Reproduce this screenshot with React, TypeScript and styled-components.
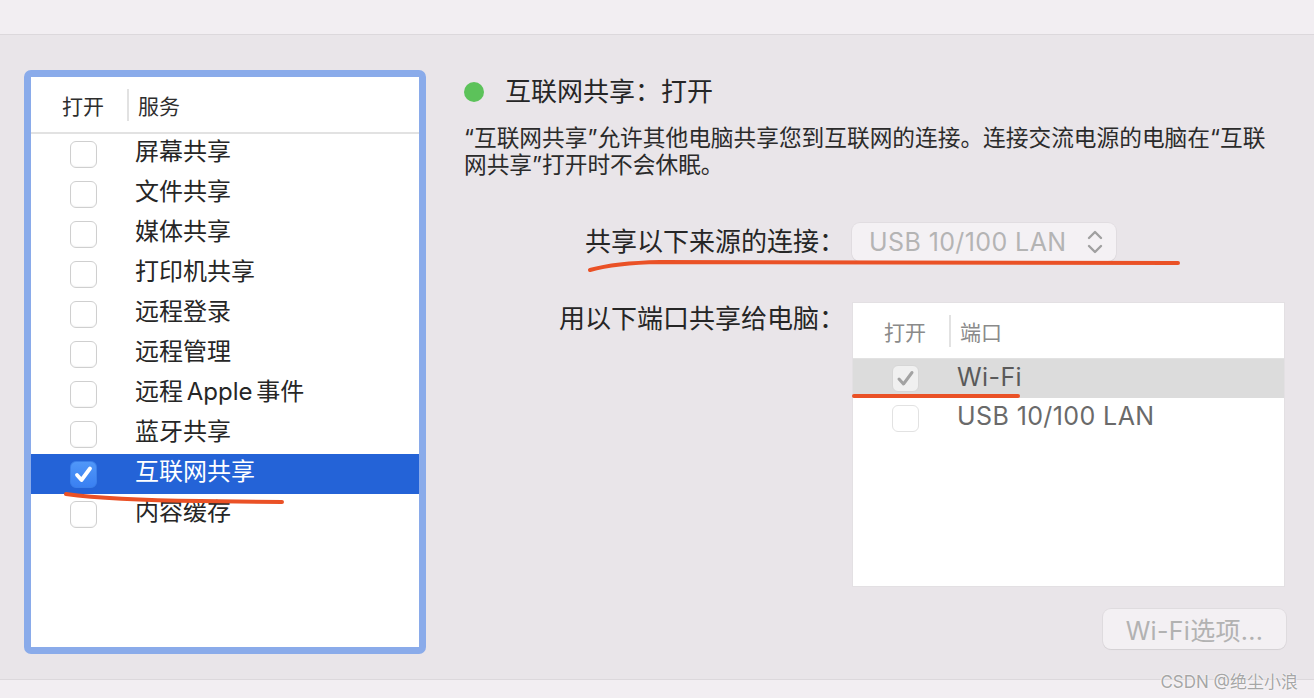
import React from "react";
import styled, { createGlobalStyle } from "styled-components";

const GlobalStyle = createGlobalStyle`
  html, body { margin: 0; padding: 0; }
  body {
    font-family: "Inter", "Noto Sans CJK SC", sans-serif;
    background: #e9e5e9;
    -webkit-font-smoothing: antialiased;
  }
`;

const Page = styled.div`
  position: relative;
  width: 1314px;
  height: 698px;
  display: flex;
  flex-direction: column;
  background: #e9e5e9;
  overflow: hidden;
`;

const TopBar = styled.div`
  height: 34px;
  flex: none;
  background: #f2eef2;
  border-bottom: 1px solid #dcd8dc;
`;

const Main = styled.div`
  flex: 1;
  min-height: 0;
  display: flex;
  align-items: flex-start;
  gap: 38px;
  padding: 35px 28px 0 24px;
`;

const Footer = styled.div`
  height: 18px;
  flex: none;
  background: #f2eef2;
  border-top: 1px solid #dcd8dc;
`;

const ServicePanel = styled.div`
  box-sizing: border-box;
  width: 402px;
  height: 584px;
  flex: none;
  border: 7px solid #8aabea;
  border-radius: 7px;
  background: #ffffff;
  display: flex;
  flex-direction: column;
`;

const TableHeader = styled.div<{ $thin?: boolean }>`
  height: 55px;
  flex: none;
  display: flex;
  align-items: center;
  border-bottom: ${(p) => (p.$thin ? "1px" : "2px")} solid #e2e2e2;
`;

const HeaderCell = styled.div<{ $muted?: boolean; $first?: boolean }>`
  box-sizing: border-box;
  width: ${(p) => (p.$first ? "96px" : "auto")};
  padding-left: ${(p) => (p.$first ? "31px" : "9px")};
  padding-top: 4px;
  font-size: 21px;
  line-height: 30px;
  color: ${(p) => (p.$muted ? "#8a8a8a" : "#2e2e2e")};
`;

const HeaderDivider = styled.div`
  width: 2px;
  height: 32px;
  background: #e2e2e2;
`;

const Row = styled.div<{ $bg?: string; $height: number }>`
  height: ${(p) => p.$height}px;
  flex: none;
  display: flex;
  align-items: center;
  padding-left: 39px;
  gap: 38px;
  background: ${(p) => p.$bg || "transparent"};
`;

const RowText = styled.span<{ $color: string; $latin?: boolean }>`
  font-size: ${(p) => (p.$latin ? "25px" : "24px")};
  letter-spacing: ${(p) => (p.$latin ? "0.4px" : "0")};
  word-spacing: ${(p) => (p.$latin ? "0" : "-3px")};
  line-height: 30px;
  padding-bottom: 4px;
  color: ${(p) => p.$color};
  white-space: nowrap;
`;

type BoxState = "off" | "on" | "disabledOn" | "disabledOff";

const Box = styled.span<{ $state: BoxState }>`
  box-sizing: border-box;
  width: 27px;
  height: 27px;
  flex: none;
  border-radius: 6px;
  display: flex;
  align-items: center;
  justify-content: center;
  background: ${(p) =>
    p.$state === "on"
      ? "linear-gradient(#5097f8, #3a80f2)"
      : p.$state === "disabledOn"
      ? "#f0f0f0"
      : "#ffffff"};
  border: 1px solid
    ${(p) =>
      p.$state === "on"
        ? "#3b7fe9"
        : p.$state === "disabledOn"
        ? "#d6d6d6"
        : p.$state === "disabledOff"
        ? "#e2e2e2"
        : "#cfcfcf"};
  box-shadow: ${(p) =>
    p.$state === "off" ? "inset 0 -1px 1px rgba(0,0,0,0.04)" : "none"};
`;

const CheckBox = ({ state }: { state: BoxState }) => (
  <Box $state={state}>
    {(state === "on" || state === "disabledOn") && (
      <svg width="23" height="23" viewBox="0 0 23 23">
        <path
          d="M5 12 L9.5 17 L18 5.5"
          fill="none"
          stroke={state === "on" ? "#ffffff" : "#a3a3a3"}
          strokeWidth={state === "on" ? 3.8 : 3}
          strokeLinecap="round"
          strokeLinejoin="round"
        />
      </svg>
    )}
  </Box>
);

const RightColumn = styled.div`
  flex: 1;
  display: flex;
  flex-direction: column;
  padding-top: 7px;
`;

const TitleRow = styled.div`
  height: 30px;
  display: flex;
  align-items: center;
  gap: 21px;
`;

const StatusDot = styled.span`
  width: 20px;
  height: 20px;
  border-radius: 50%;
  background: #5cc25a;
  flex: none;
`;

const Title = styled.h1`
  margin: 0;
  font-size: 26px;
  font-weight: 400;
  line-height: 30px;
  color: #262626;
`;

const Description = styled.p`
  margin: 17px 0 0;
  font-size: 22.7px;
  line-height: 27px;
  color: #2b2b2b;
  white-space: nowrap;
`;

const SettingsGrid = styled.div`
  display: grid;
  grid-template-columns: 381px 1fr;
  column-gap: 7px;
  row-gap: 41px;
  margin-top: 45px;
`;

const Label = styled.div<{ $top?: boolean }>`
  font-size: 26px;
  line-height: 30px;
  color: #262626;
  text-align: right;
  white-space: nowrap;
  align-self: ${(p) => (p.$top ? "start" : "center")};
  padding-top: ${(p) => (p.$top ? "2px" : "0")};
`;

const PopUp = styled.div`
  box-sizing: border-box;
  width: 264px;
  height: 38px;
  display: flex;
  align-items: center;
  justify-content: space-between;
  padding: 0 12px 0 17px;
  background: #f4f1f4;
  border-radius: 8px;
  box-shadow: 0 0 0 1px rgba(0, 0, 0, 0.03), 0 1px 1px rgba(0, 0, 0, 0.05);
  font-size: 25px;
  letter-spacing: 0.4px;
  color: #b4b4b4;
`;

const PortTable = styled.div`
  box-sizing: border-box;
  width: 433px;
  height: 285px;
  background: #ffffff;
  border: 1px solid #e3e0e3;
  display: flex;
  flex-direction: column;
`;

const ButtonRow = styled.div`
  display: flex;
  justify-content: flex-end;
  margin-top: 22px;
`;

const OptionsButton = styled.button`
  box-sizing: border-box;
  width: 183px;
  height: 40px;
  border: none;
  border-radius: 8px;
  background: #f3f0f3;
  box-shadow: 0 0 0 1px rgba(0, 0, 0, 0.04), 0 1px 1px rgba(0, 0, 0, 0.05);
  font-family: inherit;
  font-size: 25px;
  letter-spacing: 0.3px;
  color: #b2b2b2;
  padding: 0;
`;

const Watermark = styled.div`
  position: absolute;
  right: 16px;
  bottom: 5px;
  font-size: 17px;
  color: #a6a6a6;
  text-shadow: 0 0 2px #ffffff, 0 0 1px #ffffff;
  white-space: nowrap;
`;

const Annotations = styled.svg`
  position: absolute;
  top: 0;
  left: 0;
  pointer-events: none;
`;

const services = [
  "屏幕共享",
  "文件共享",
  "媒体共享",
  "打印机共享",
  "远程登录",
  "远程管理",
  "远程 Apple 事件",
  "蓝牙共享",
  "互联网共享",
  "内容缓存",
];

const Chevrons = () => (
  <svg width="18" height="28" viewBox="0 0 18 28">
    <path
      d="M3 10 L9 4 L15 10 M3 18 L9 24 L15 18"
      fill="none"
      stroke="#a0a0a0"
      strokeWidth="2.4"
      strokeLinecap="round"
      strokeLinejoin="round"
    />
  </svg>
);

export default function App() {
  return (
    <>
      <GlobalStyle />
      <Page>
        <TopBar />
        <Main>
          <ServicePanel>
            <TableHeader>
              <HeaderCell $first>打开</HeaderCell>
              <HeaderDivider />
              <HeaderCell>服务</HeaderCell>
            </TableHeader>
            {services.map((s) => {
              const selected = s === "互联网共享";
              return (
                <Row key={s} $height={40} $bg={selected ? "#2463d7" : undefined}>
                  <CheckBox state={selected ? "on" : "off"} />
                  <RowText $color={selected ? "#ffffff" : "#262626"}>{s}</RowText>
                </Row>
              );
            })}
          </ServicePanel>
          <RightColumn>
            <TitleRow>
              <StatusDot />
              <Title>互联网共享：打开</Title>
            </TitleRow>
            <Description>
              “互联网共享”允许其他电脑共享您到互联网的连接。连接交流电源的电脑在“互联
              <br />
              网共享”打开时不会休眠。
            </Description>
            <SettingsGrid>
              <Label>共享以下来源的连接：</Label>
              <PopUp>
                <span>USB 10/100 LAN</span>
                <Chevrons />
              </PopUp>
              <Label $top>用以下端口共享给电脑：</Label>
              <PortTable>
                <TableHeader $thin>
                  <HeaderCell $first $muted>
                    打开
                  </HeaderCell>
                  <HeaderDivider />
                  <HeaderCell $muted>端口</HeaderCell>
                </TableHeader>
                <Row $height={39} $bg="#dcdcdc">
                  <CheckBox state="disabledOn" />
                  <RowText $latin $color="#5a5a5a">Wi-Fi</RowText>
                </Row>
                <Row $height={40}>
                  <CheckBox state="disabledOff" />
                  <RowText $latin $color="#6a6a6a">USB 10/100 LAN</RowText>
                </Row>
              </PortTable>
            </SettingsGrid>
            <ButtonRow>
              <OptionsButton>Wi-Fi选项...</OptionsButton>
            </ButtonRow>
          </RightColumn>
        </Main>
        <Footer />
        <Watermark>CSDN @绝尘小浪</Watermark>
        <Annotations width="1314" height="698" viewBox="0 0 1314 698">
          <g fill="none" stroke="#ea5126" strokeWidth="4" strokeLinecap="round">
            <path d="M590 270 Q 615 263 660 262 L 1178 263" />
            <path d="M854 396 L 1018 396" />
            <path d="M66 494 Q 110 500 200 501 L 282 502" />
          </g>
        </Annotations>
      </Page>
    </>
  );
}
